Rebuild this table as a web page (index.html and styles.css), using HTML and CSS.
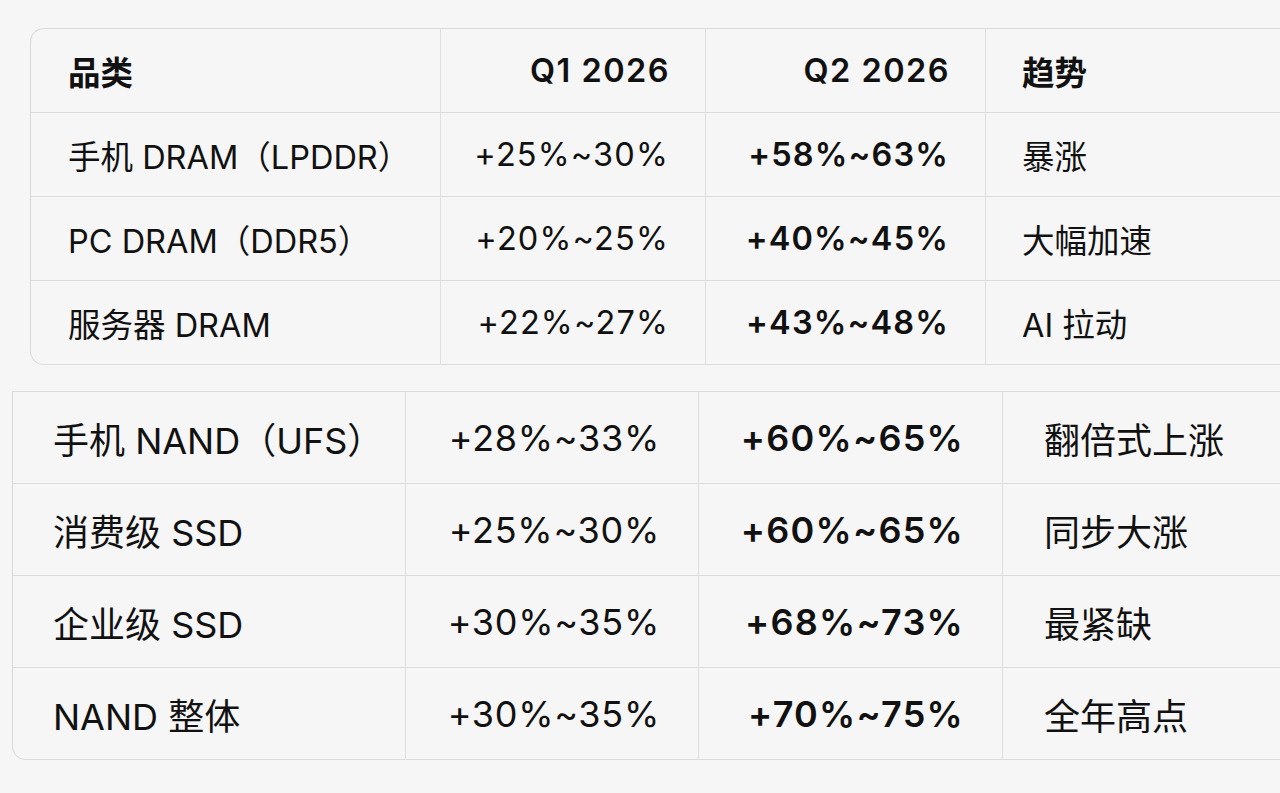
FILE: index.html
```html
<!DOCTYPE html>
<html lang="zh-CN">
<head>
<meta charset="utf-8">
<title>存储价格涨幅</title>
<link rel="stylesheet" href="styles.css">
</head>
<body>
<main class="page">
  <table class="grid grid-dram">
    <colgroup>
      <col class="c1"><col class="c2"><col class="c3"><col class="c4">
    </colgroup>
    <thead>
      <tr>
        <th class="name">品类</th>
        <th class="q1">Q1 2026</th>
        <th class="q2">Q2 2026</th>
        <th class="trend">趋势</th>
      </tr>
    </thead>
    <tbody>
      <tr>
        <td class="name">手机 DRAM（LPDDR）</td>
        <td class="q1">+25%~30%</td>
        <td class="q2">+58%~63%</td>
        <td class="trend">暴涨</td>
      </tr>
      <tr>
        <td class="name">PC DRAM（DDR5）</td>
        <td class="q1">+20%~25%</td>
        <td class="q2">+40%~45%</td>
        <td class="trend">大幅加速</td>
      </tr>
      <tr>
        <td class="name">服务器 DRAM</td>
        <td class="q1">+22%~27%</td>
        <td class="q2">+43%~48%</td>
        <td class="trend">AI 拉动</td>
      </tr>
    </tbody>
  </table>

  <table class="grid grid-nand">
    <colgroup>
      <col class="c1"><col class="c2"><col class="c3"><col class="c4">
    </colgroup>
    <tbody>
      <tr>
        <td class="name">手机 NAND（UFS）</td>
        <td class="q1">+28%~33%</td>
        <td class="q2">+60%~65%</td>
        <td class="trend">翻倍式上涨</td>
      </tr>
      <tr>
        <td class="name">消费级 SSD</td>
        <td class="q1">+25%~30%</td>
        <td class="q2">+60%~65%</td>
        <td class="trend">同步大涨</td>
      </tr>
      <tr>
        <td class="name">企业级 SSD</td>
        <td class="q1">+30%~35%</td>
        <td class="q2">+68%~73%</td>
        <td class="trend">最紧缺</td>
      </tr>
      <tr>
        <td class="name">NAND 整体</td>
        <td class="q1">+30%~35%</td>
        <td class="q2">+70%~75%</td>
        <td class="trend">全年高点</td>
      </tr>
    </tbody>
  </table>
</main>
</body>
</html>
```

FILE: styles.css
```css
html, body {
  margin: 0;
  padding: 0;
  background: #f6f6f6;
  overflow: hidden;
}

body {
  width: 1280px;
  height: 793px;
  font-family: "Inter", "Noto Sans CJK SC", sans-serif;
  color: #111;
}

.page {
  display: flex;
  flex-direction: column;
  align-items: flex-start;
  padding-top: 28px;
}

.grid {
  border-collapse: separate;
  border-spacing: 0;
  table-layout: fixed;
  border-top: 1px solid #dadada;
  border-left: 1px solid #d8d8d8;
  background: #f6f6f6;
  flex: none;
}

.grid th,
.grid td {
  border-right: 1px solid #dfdfdf;
  border-bottom: 1px solid #dcdcdc;
  padding: 0;
  white-space: nowrap;
  overflow: hidden;
  text-align: left;
  font-weight: 400;
}

.grid th {
  font-weight: 600;
}

.grid .q2 {
  font-weight: 600;
}

.grid .q1,
.grid .q2 {
  text-align: right;
  letter-spacing: 0.035em;
}

/* DRAM table */
.grid-dram {
  margin-left: 30px;
  width: 1380px;
  font-size: 32.5px;
  border-top-left-radius: 14px;
  border-bottom-left-radius: 14px;
}

.grid-dram .c1 { width: 410px; }
.grid-dram .c2 { width: 265px; }
.grid-dram .c3 { width: 280px; }
.grid-dram .c4 { width: 425px; }

.grid-dram tr { height: 84px; }

.grid-dram .name { padding-left: 37px; }
.grid-dram .q1,
.grid-dram .q2 { padding-right: 36px; }
.grid-dram th.q1,
.grid-dram th.q2 { letter-spacing: 0.045em; padding-right: 35px; }
.grid-dram .trend { padding-left: 36px; }

.grid-dram thead tr:first-child th:first-child {
  border-top-left-radius: 13px;
}

.grid-dram tbody tr:last-child td:first-child {
  border-bottom-left-radius: 13px;
}

/* NAND table */
.grid-nand {
  margin-left: 12px;
  margin-top: 26px;
  width: 1398px;
  font-size: 36px;
  border-bottom-left-radius: 14px;
}

.grid-nand .c1 { width: 393px; }
.grid-nand .c2 { width: 293px; }
.grid-nand .c3 { width: 304px; }
.grid-nand .c4 { width: 408px; }

.grid-nand tr { height: 92px; }

.grid-nand .name { padding-left: 40px; }
.grid-nand .q1 { padding-right: 38px; letter-spacing: 0.02em; }
.grid-nand .q2 { padding-right: 38px; }
.grid-nand .trend { padding-left: 41px; }

.grid-nand tbody tr:last-child td:first-child {
  border-bottom-left-radius: 13px;
}
```
